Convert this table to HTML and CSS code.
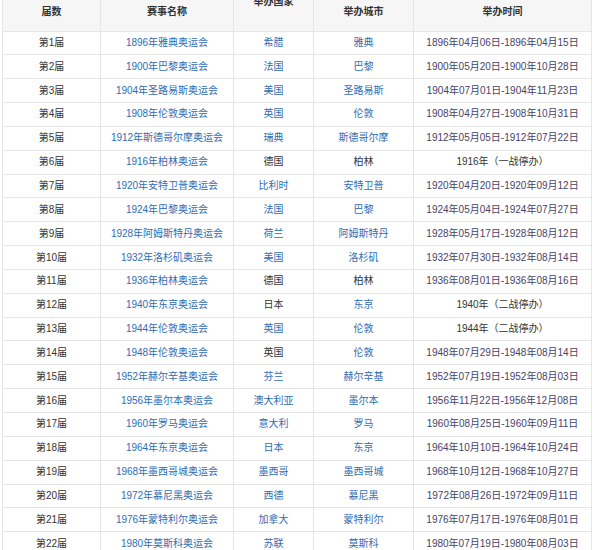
FILE: index.html
```html
<!DOCTYPE html>
<html lang="zh-CN">
<head>
<meta charset="utf-8">
<title>历届奥运会</title>
<link rel="stylesheet" href="styles.css">
</head>
<body>
<table class="games">
  <colgroup>
    <col class="c-no"><col class="c-name"><col class="c-country"><col class="c-city"><col class="c-time">
  </colgroup>
  <thead>
    <tr>
      <th>届数</th>
      <th>赛事名称</th>
      <th class="th-top"><span class="lift">举办国家</span></th>
      <th>举办城市</th>
      <th>举办时间</th>
    </tr>
  </thead>
  <tbody>
    <tr><td>第1届</td><td><a>1896年雅典奥运会</a></td><td><a>希腊</a></td><td><a>雅典</a></td><td class="date">1896年04月06日-1896年04月15日</td></tr>
    <tr><td>第2届</td><td><a>1900年巴黎奥运会</a></td><td><a>法国</a></td><td><a>巴黎</a></td><td class="date">1900年05月20日-1900年10月28日</td></tr>
    <tr><td>第3届</td><td><a>1904年圣路易斯奥运会</a></td><td><a>美国</a></td><td><a>圣路易斯</a></td><td class="date">1904年07月01日-1904年11月23日</td></tr>
    <tr><td>第4届</td><td><a>1908年伦敦奥运会</a></td><td><a>英国</a></td><td><a>伦敦</a></td><td class="date">1908年04月27日-1908年10月31日</td></tr>
    <tr><td>第5届</td><td><a>1912年斯德哥尔摩奥运会</a></td><td><a>瑞典</a></td><td><a>斯德哥尔摩</a></td><td class="date">1912年05月05日-1912年07月22日</td></tr>
    <tr><td>第6届</td><td><a>1916年柏林奥运会</a></td><td>德国</td><td>柏林</td><td>1916年（一战停办）</td></tr>
    <tr><td>第7届</td><td><a>1920年安特卫普奥运会</a></td><td><a>比利时</a></td><td><a>安特卫普</a></td><td class="date">1920年04月20日-1920年09月12日</td></tr>
    <tr><td>第8届</td><td><a>1924年巴黎奥运会</a></td><td><a>法国</a></td><td><a>巴黎</a></td><td class="date">1924年05月04日-1924年07月27日</td></tr>
    <tr><td>第9届</td><td><a>1928年阿姆斯特丹奥运会</a></td><td><a>荷兰</a></td><td><a>阿姆斯特丹</a></td><td class="date">1928年05月17日-1928年08月12日</td></tr>
    <tr><td>第10届</td><td><a>1932年洛杉矶奥运会</a></td><td><a>美国</a></td><td><a>洛杉矶</a></td><td class="date">1932年07月30日-1932年08月14日</td></tr>
    <tr><td>第11届</td><td><a>1936年柏林奥运会</a></td><td>德国</td><td>柏林</td><td class="date">1936年08月01日-1936年08月16日</td></tr>
    <tr><td>第12届</td><td><a>1940年东京奥运会</a></td><td>日本</td><td><a>东京</a></td><td>1940年（二战停办）</td></tr>
    <tr><td>第13届</td><td><a>1944年伦敦奥运会</a></td><td><a>英国</a></td><td><a>伦敦</a></td><td>1944年（二战停办）</td></tr>
    <tr><td>第14届</td><td><a>1948年伦敦奥运会</a></td><td>英国</td><td><a>伦敦</a></td><td class="date">1948年07月29日-1948年08月14日</td></tr>
    <tr><td>第15届</td><td><a>1952年赫尔辛基奥运会</a></td><td><a>芬兰</a></td><td><a>赫尔辛基</a></td><td class="date">1952年07月19日-1952年08月03日</td></tr>
    <tr><td>第16届</td><td><a>1956年墨尔本奥运会</a></td><td><a>澳大利亚</a></td><td><a>墨尔本</a></td><td class="date">1956年11月22日-1956年12月08日</td></tr>
    <tr><td>第17届</td><td><a>1960年罗马奥运会</a></td><td><a>意大利</a></td><td><a>罗马</a></td><td class="date">1960年08月25日-1960年09月11日</td></tr>
    <tr><td>第18届</td><td><a>1964年东京奥运会</a></td><td><a>日本</a></td><td><a>东京</a></td><td class="date">1964年10月10日-1964年10月24日</td></tr>
    <tr><td>第19届</td><td><a>1968年墨西哥城奥运会</a></td><td><a>墨西哥</a></td><td><a>墨西哥城</a></td><td class="date">1968年10月12日-1968年10月27日</td></tr>
    <tr><td>第20届</td><td><a>1972年慕尼黑奥运会</a></td><td><a>西德</a></td><td><a>慕尼黑</a></td><td class="date">1972年08月26日-1972年09月11日</td></tr>
    <tr><td>第21届</td><td><a>1976年蒙特利尔奥运会</a></td><td><a>加拿大</a></td><td><a>蒙特利尔</a></td><td class="date">1976年07月17日-1976年08月01日</td></tr>
    <tr><td>第22届</td><td><a>1980年莫斯科奥运会</a></td><td><a>苏联</a></td><td><a>莫斯科</a></td><td class="date">1980年07月19日-1980年08月03日</td></tr>
  </tbody>
</table>
</body>
</html>
```
FILE: styles.css
```css
html, body {
  margin: 0;
  padding: 0;
  background: #ffffff;
}

body {
  font-family: "Liberation Sans", "Noto Sans CJK SC", sans-serif;
  font-size: 10px;
  color: #333333;
}

.games {
  margin-left: 2px;
  border-collapse: collapse;
  table-layout: fixed;
  width: 589px;
}

.c-no { width: 98px; }
.c-name { width: 133px; }
.c-country { width: 80px; }
.c-city { width: 100px; }
.c-time { width: 178px; }

.games th,
.games td {
  border: 1px solid #e6e6e6;
  text-align: center;
  padding: 0;
  white-space: nowrap;
  overflow: hidden;
}

.games thead th {
  border-top: none;
  background: #f6f6f6;
  font-weight: bold;
  color: #333333;
  height: 31px;
  vertical-align: middle;
  padding-bottom: 7px;
  box-sizing: border-box;
  line-height: 12px;
}

.games thead th.th-top {
  vertical-align: top;
  padding-bottom: 0;
}

.lift {
  display: block;
  margin-top: -4px;
}

.games tbody td {
  height: 22.85px;
  line-height: 12px;
  vertical-align: middle;
}

.games a {
  color: #2f6cb5;
  text-decoration: none;
}

.games td.date {
  color: #47426a;
}
```
